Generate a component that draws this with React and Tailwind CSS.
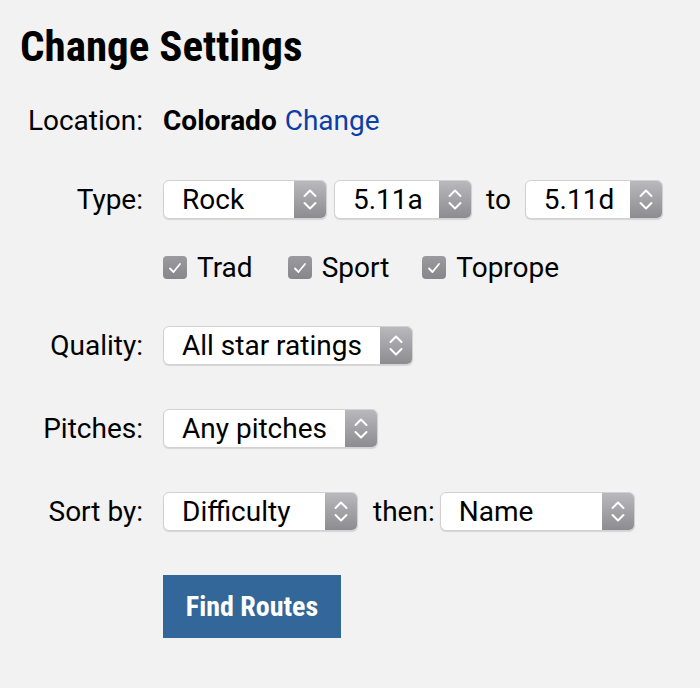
import React from "react";

function Chevrons() {
  return (
    <svg width="32" height="38" viewBox="0 0 32 38" className="block">
      <path d="M10.5 15 L16 9.5 L21.5 15" fill="none" stroke="white" strokeWidth="2" strokeLinecap="round" strokeLinejoin="round" />
      <path d="M10.5 22 L16 27.5 L21.5 22" fill="none" stroke="white" strokeWidth="2" strokeLinecap="round" strokeLinejoin="round" />
    </svg>
  );
}

function Select({ value, w }) {
  return (
    <div
      className={`flex h-[39px] items-stretch overflow-hidden rounded-[6px] border border-[#d2d2d2] bg-white shadow-[0_1px_1px_rgba(0,0,0,0.12)] ${w}`}
    >
      <div className="flex flex-1 items-center pl-[18px] text-[28px] leading-none text-black">{value}</div>
      <div className="flex w-[32px] items-center justify-center bg-gradient-to-b from-[#b9b9bd] to-[#8c8c91]">
        <Chevrons />
      </div>
    </div>
  );
}

function Check({ label, ml }) {
  return (
    <div className={`flex items-center ${ml}`}>
      <div className="flex h-[23px] w-[24px] items-center justify-center rounded-[4px] bg-gradient-to-b from-[#9a9a9f] to-[#86868b]">
        <svg width="16" height="14" viewBox="0 0 16 14">
          <path d="M3 7.5 L6.5 11 L13 3" fill="none" stroke="white" strokeWidth="1.8" strokeLinecap="round" strokeLinejoin="round" />
        </svg>
      </div>
      <span className="ml-[10px] text-[28px] leading-none">{label}</span>
    </div>
  );
}

function Row({ label, children, className = "" }) {
  return (
    <div className={`flex h-[39px] items-center ${className}`}>
      <div className="w-[143px] shrink-0 text-right text-[28px] leading-none">{label}</div>
      <div className="ml-[20px] flex items-center">{children}</div>
    </div>
  );
}

export default function App() {
  return (
    <div
      className="h-[688px] w-[700px] bg-[#f2f2f2] text-black"
      style={{ fontFamily: "Roboto, 'Noto Sans', sans-serif" }}
    >
      <div className="pt-[25px]">
        <h1
          className="ml-[20px] h-[42px] text-[43px] font-bold leading-none"
          style={{ fontFamily: "'Roboto Condensed', Roboto, sans-serif", fontStretch: "condensed" }}
        >
          Change Settings
        </h1>
        <Row label="Location:" className="mt-[34px]">
          <span className="text-[28px] leading-none font-bold">Colorado</span>
          <span className="ml-[8px] text-[28px] leading-none text-[#0b3ea6]">Change</span>
        </Row>
        <Row label="Type:" className="mt-[40px]">
          <Select value="Rock" w="w-[164px]" />
          <div className="ml-[7px]">
            <Select value="5.11a" w="w-[138px]" />
          </div>
          <span className="mx-[14px] text-[28px] leading-none">to</span>
          <Select value="5.11d" w="w-[138px]" />
        </Row>
        <Row label="" className="mt-[29px]">
          <Check label="Trad" ml="" />
          <Check label="Sport" ml="ml-[35px]" />
          <Check label="Toprope" ml="ml-[33px]" />
        </Row>
        <Row label="Quality:" className="mt-[39px]">
          <Select value="All star ratings" w="w-[250px]" />
        </Row>
        <Row label="Pitches:" className="mt-[44px]">
          <Select value="Any pitches" w="w-[215px]" />
        </Row>
        <Row label="Sort by:" className="mt-[44px]">
          <Select value="Difficulty" w="w-[195px]" />
          <span className="ml-[15px] mr-[5px] text-[28px] leading-none">then:</span>
          <Select value="Name" w="w-[195px]" />
        </Row>
        <div className="ml-[163px] mt-[44px]">
          <button
            className="flex h-[63px] w-[178px] items-center justify-center bg-[#336699] text-[28px] font-bold leading-none text-white"
            style={{ fontFamily: "'Roboto Condensed', Roboto, sans-serif", fontStretch: "condensed" }}
          >
            Find Routes
          </button>
        </div>
      </div>
    </div>
  );
}
